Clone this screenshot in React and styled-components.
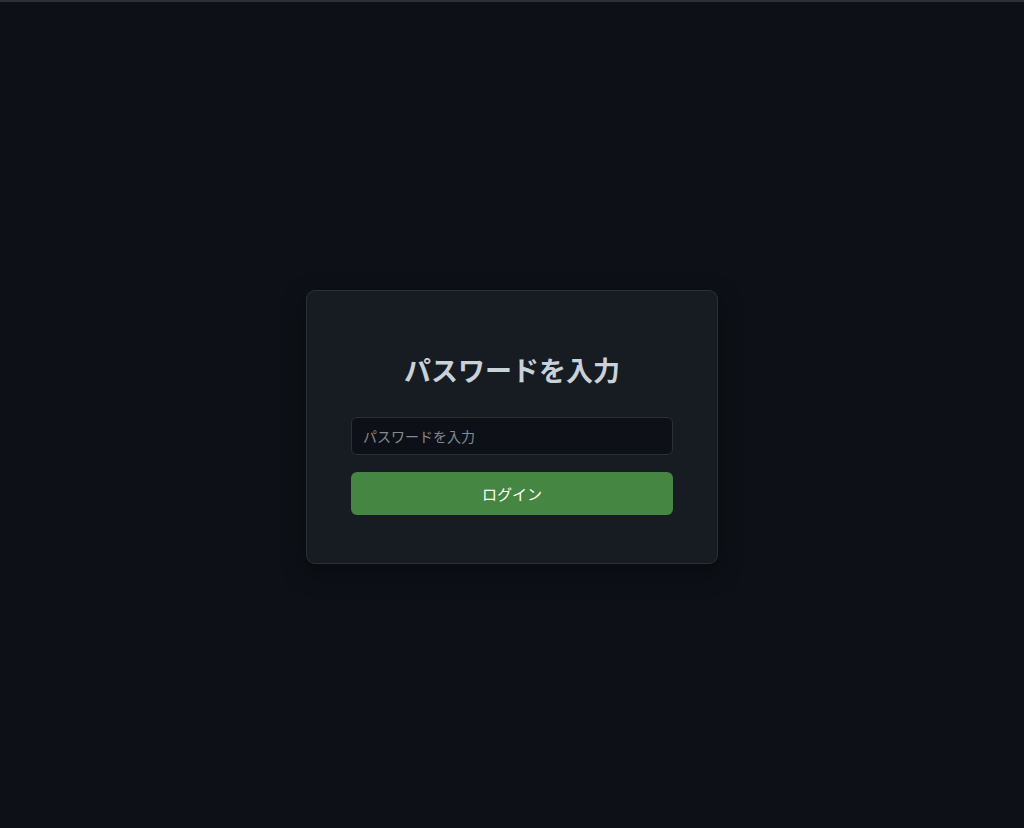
import React from 'react';
import styled, { createGlobalStyle } from 'styled-components';

const GlobalStyle = createGlobalStyle`
  html, body {
    margin: 0;
    padding: 0;
    background-color: #0d1117;
  }
  body {
    font-family: "Noto Sans CJK JP", "Noto Sans", sans-serif;
  }
`;

const Page = styled.div`
  min-height: 828px;
  box-sizing: border-box;
  border-top: 2px solid #2e3034;
  background-color: #0d1117;
  display: flex;
  align-items: center;
  justify-content: center;
  padding-top: 24px;
`;

const Card = styled.form`
  width: 410px;
  box-sizing: content-box;
  padding: 44px 0 48px;
  background-color: #171b22;
  border: 1px solid #2b3038;
  border-radius: 9px;
  box-shadow: 0 8px 24px rgba(0, 0, 0, 0.45);
  display: flex;
  flex-direction: column;
  align-items: center;
`;

const Title = styled.h1`
  margin: 18px 0 30px;
  color: #c9d1d9;
  font-size: 27px;
  font-weight: 700;
  line-height: 34px;
  letter-spacing: 0;
`;

const Field = styled.input`
  width: 322px;
  height: 38px;
  box-sizing: border-box;
  padding: 0 11px;
  background-color: #0d1016;
  border: 1px solid #2b3038;
  border-radius: 6px;
  color: #c9d1d9;
  font-family: inherit;
  font-size: 14px;
  outline: none;

  &::placeholder {
    color: #858b93;
  }
`;

const Button = styled.button`
  width: 322px;
  height: 43px;
  margin-top: 17px;
  background-color: #448642;
  border: none;
  border-radius: 6px;
  color: #ffffff;
  font-family: inherit;
  font-size: 15px;
  font-weight: 400;
  cursor: pointer;
`;

export default function App() {
  return (
    <>
      <GlobalStyle />
      <Page>
        <Card onSubmit={e => e.preventDefault()}>
          <Title>パスワードを入力</Title>
          <Field type="password" placeholder="パスワードを入力" />
          <Button type="submit">ログイン</Button>
        </Card>
      </Page>
    </>
  );
}
